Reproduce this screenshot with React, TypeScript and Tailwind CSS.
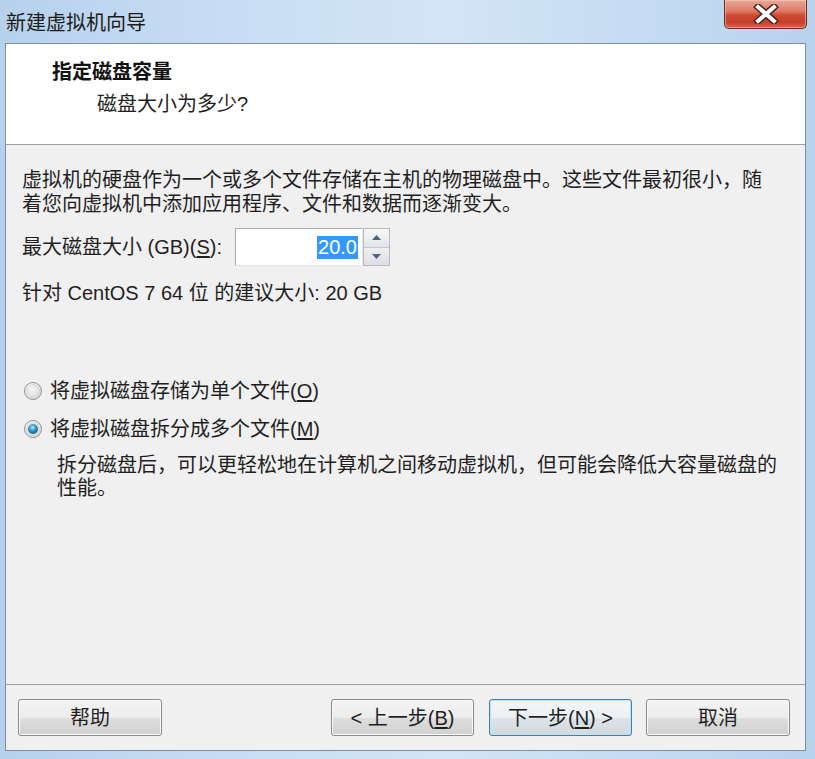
import React from "react";

const FONT = '"Liberation Sans", "Noto Sans CJK SC", sans-serif';

function Radio({ checked }: { checked?: boolean }) {
  return (
    <span className="relative flex h-[18px] w-[18px] shrink-0 items-center justify-center rounded-full border border-[#8e9398] bg-[radial-gradient(circle_at_35%_30%,#ffffff_0%,#eeeeee_45%,#cfcfcf_100%)]">
      <span className="h-[14px] w-[14px] rounded-full border border-[#d8d8d8] bg-[radial-gradient(circle_at_40%_35%,#f6f6f6_0%,#e4e4e4_60%,#d2d2d2_100%)] flex items-center justify-center">
        {checked && (
          <span className="h-[10px] w-[10px] rounded-full bg-[radial-gradient(circle_at_45%_35%,#b9ecff_0%,#3aa0d2_35%,#125b86_75%,#0b3b5c_100%)]" />
        )}
      </span>
    </span>
  );
}

function Btn({ children, def }: { children: React.ReactNode; def?: boolean }) {
  return (
    <div
      className={
        "flex h-[37px] items-center justify-center rounded-[3px] border text-[20px] text-[#1f1f1f] " +
        (def
          ? "border-[#3c7fb1] bg-[linear-gradient(to_bottom,#f2f6f9_0%,#ebf0f3_50%,#dde4e9_51%,#d2dadf_100%)] shadow-[inset_0_0_0_1px_#bfe3f6]"
          : "border-[#8a8a8a] bg-[linear-gradient(to_bottom,#f4f4f4_0%,#ececec_50%,#dedede_51%,#d0d0d0_100%)] shadow-[inset_0_0_0_1px_#fbfbfb]")
      }
    >
      {children}
    </div>
  );
}

export default function App() {
  return (
    <div
      className="relative flex h-[759px] w-[815px] flex-col overflow-hidden bg-[linear-gradient(to_right,#b7d1ec_0%,#c9def4_30%,#d3e5f6_55%,#c4dbf2_80%,#b9d2ec_100%)]"
      style={{ fontFamily: FONT }}
    >
      {/* Title bar */}
      <div className="flex h-[43px] shrink-0 items-center pl-[6px] pt-[2px] text-[20px] text-[#1b1b1b]">
        新建虚拟机向导
      </div>
      {/* Close button */}
      <div className="absolute left-[724px] top-0 flex h-[29px] w-[83px] items-center justify-center rounded-b-[5px] border border-t-0 border-[#6e2a22] bg-[linear-gradient(to_bottom,#e9a898_0%,#dc7a64_40%,#cf4a32_55%,#c7402b_80%,#d7664e_100%)] shadow-[inset_0_0_0_1px_rgba(255,220,210,0.45)]">
        <svg width="26" height="20" viewBox="0 0 26 20">
          <path d="M5 3 L21 17 M21 3 L5 17" stroke="#4a2520" strokeWidth="7" strokeLinecap="square" />
          <path d="M5 3 L21 17 M21 3 L5 17" stroke="#ffffff" strokeWidth="4" strokeLinecap="square" />
        </svg>
      </div>

      {/* Inner frame */}
      <div className="ml-[5px] mr-[9px] flex h-[708px] shrink-0 flex-col border border-[#7d8ea3] bg-[#f0f0f0]">
        {/* Header */}
        <div className="h-[101px] shrink-0 border-b border-[#a0a0a0] bg-white">
          <div className="pl-[46px] pt-[16px] text-[20px] font-bold leading-[24px] text-[#111]">
            指定磁盘容量
          </div>
          <div className="pl-[91px] pt-[8px] text-[20px] leading-[24px] text-[#1f1f1f]">
            磁盘大小为多少?
          </div>
        </div>

        {/* Body */}
        <div className="flex flex-1 flex-col pl-[16px] text-[20px] text-[#1f1f1f]">
          <div className="mt-[23px] whitespace-nowrap leading-[24px]">
            虚拟机的硬盘作为一个或多个文件存储在主机的物理磁盘中。这些文件最初很小，随
            <br />
            着您向虚拟机中添加应用程序、文件和数据而逐渐变大。
          </div>

          <div className="mt-[12px] flex h-[38px] items-center">
            <div className="w-[213px] whitespace-nowrap leading-[24px]">
              最大磁盘大小 (GB)(<span className="underline underline-offset-2">S</span>):
            </div>
            <div className="flex h-[38px] w-[128px] items-center justify-end border border-[#abadb3] border-r-[#e3e9ef] border-b-[#e3e9ef] bg-white pr-[4px]">
              <span className="bg-[#3399ff] px-[1px] leading-[23px] text-white">20.0</span>
            </div>
            <div className="flex h-[38px] w-[27px] flex-col border border-[#b6bcc6] bg-[#f5f5f5]">
              <div className="flex flex-1 items-center justify-center border-b border-[#c4cad3] bg-[linear-gradient(to_bottom,#f7f7f7,#e3e5e8)]">
                <svg width="9" height="5" viewBox="0 0 9 5">
                  <path d="M0 5 L4.5 0 L9 5 Z" fill="#4d6185" />
                </svg>
              </div>
              <div className="flex flex-1 items-center justify-center bg-[linear-gradient(to_bottom,#eeeff1,#dcdfe3)]">
                <svg width="9" height="5" viewBox="0 0 9 5">
                  <path d="M0 0 L9 0 L4.5 5 Z" fill="#4d6185" />
                </svg>
              </div>
            </div>
          </div>

          <div className="mt-[15px] whitespace-nowrap leading-[24px]">
            针对 CentOS 7 64 位 的建议大小: 20 GB
          </div>

          <div className="mt-[74px] flex items-center gap-[8px] leading-[24px]">
            <span className="ml-[2px]">
              <Radio />
            </span>
            <span>
              将虚拟磁盘存储为单个文件(<span className="underline underline-offset-2">O</span>)
            </span>
          </div>

          <div className="mt-[14px] flex items-center gap-[8px] leading-[24px]">
            <span className="ml-[2px]">
              <Radio checked />
            </span>
            <span>
              将虚拟磁盘拆分成多个文件(<span className="underline underline-offset-2">M</span>)
            </span>
          </div>

          <div className="mt-[13px] whitespace-nowrap pl-[35px] leading-[23px]">
            拆分磁盘后，可以更轻松地在计算机之间移动虚拟机，但可能会降低大容量磁盘的
            <br />
            性能。
          </div>
        </div>

        {/* Buttons */}
        <div className="flex h-[66px] shrink-0 border-t border-[#a0a0a0] pl-[12px] pr-[15px] pt-[14px]">
          <div className="w-[144px]">
            <Btn>帮助</Btn>
          </div>
          <div className="flex-1" />
          <div className="flex gap-[14px]">
            <div className="w-[143px]">
              <Btn>
                &lt; 上一步(<span className="underline underline-offset-2">B</span>)
              </Btn>
            </div>
            <div className="ml-[1px] w-[143px]">
              <Btn def>
                下一步(<span className="underline underline-offset-2">N</span>) &gt;
              </Btn>
            </div>
            <div className="w-[144px]">
              <Btn>取消</Btn>
            </div>
          </div>
        </div>
      </div>
    </div>
  );
}
